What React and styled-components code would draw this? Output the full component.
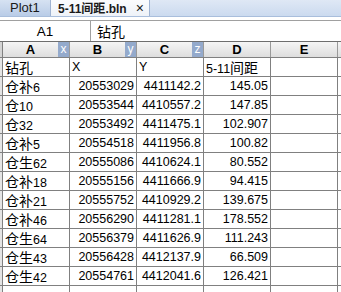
import styled, { createGlobalStyle } from "styled-components";

const GlobalStyle = createGlobalStyle`
  html, body {
    margin: 0;
    padding: 0;
    background: #ffffff;
  }
  body {
    font-family: "Liberation Sans", "Noto Sans CJK SC", sans-serif;
    font-size: 12.5px;
    color: #000;
    overflow: hidden;
  }
`;

const columns = [
  { name: "A", badge: "x" },
  { name: "B", badge: "y" },
  { name: "C", badge: "z" },
  { name: "D" },
  { name: "E" },
];

const rows = [
  ["钻孔", "X", "Y", "5-11间距"],
  ["仓补6", "20553029", "4411142.2", "145.05"],
  ["仓10", "20553544", "4410557.2", "147.85"],
  ["仓32", "20553492", "4411475.1", "102.907"],
  ["仓补5", "20554518", "4411956.8", "100.82"],
  ["仓生62", "20555086", "4410624.1", "80.552"],
  ["仓补18", "20555156", "4411666.9", "94.415"],
  ["仓补21", "20555752", "4410929.2", "139.675"],
  ["仓补46", "20556290", "4411281.1", "178.552"],
  ["仓生64", "20556379", "4411626.9", "111.243"],
  ["仓生43", "20556428", "4412137.9", "66.509"],
  ["仓生42", "20554761", "4412041.6", "126.421"],
  ["", "", "", ""],
];

// CJK glyphs come out larger than the latin ones in the original grid
const Mixed = ({ text }) =>
  text.split(/([\u4e00-\u9fff]+)/).map((part, i) =>
    /[\u4e00-\u9fff]/.test(part) ? <Cjk key={i}>{part}</Cjk> : part
  );

export default function App() {
  return (
    <Page>
      <GlobalStyle />
      <TabBar>
        <Tab>Plot1</Tab>
        <Tab active>
          <TabTitle>
            5-11<Cjk>间距</Cjk>.bln
          </TabTitle>
          <Close>×</Close>
        </Tab>
      </TabBar>
      <FormulaBar>
        <NameBox>A1</NameBox>
        <FormulaText>
          <Cjk>钻孔</Cjk>
        </FormulaText>
      </FormulaBar>
      <Grid>
        <HeadRow>
          <Gutter head />
          {columns.map((c) => (
            <HeadCell key={c.name}>
              <HeadLabel>{c.name}</HeadLabel>
              {c.badge && <Badge>{c.badge}</Badge>}
            </HeadCell>
          ))}
          <HeadCell />
        </HeadRow>
        {rows.map((r, i) => (
          <Row key={i}>
            <Gutter />
            {r.map((v, j) => (
              <Cell key={j} numeric={i > 0 && j > 0}>
                <Mixed text={v} />
              </Cell>
            ))}
            <Cell />
            <Cell />
          </Row>
        ))}
      </Grid>
    </Page>
  );
}

const Page = styled.div`
  width: 341px;
  height: 292px;
  overflow: hidden;
  display: flex;
  flex-direction: column;
`;

const Cjk = styled.span`
  font-family: "Noto Sans CJK SC", sans-serif;
  font-size: 14px;
`;

const TabBar = styled.div`
  display: flex;
  height: 16px;
  flex-shrink: 0;
  background: linear-gradient(#dfe8f5, #cbdaef);
  border-bottom: 1px solid #a9bedc;
  margin-bottom: 3px;
`;

const Tab = styled.div`
  display: flex;
  align-items: center;
  height: 100%;
  box-sizing: border-box;
  padding: ${(p) => (p.active ? "0 5px 0 7px" : "0 10px")};
  width: ${(p) => (p.active ? "99px" : "51px")};
  font-size: ${(p) => (p.active ? "12px" : "13px")};
  font-weight: ${(p) => (p.active ? "bold" : "normal")};
  color: #1a1a1a;
  background: ${(p) =>
    p.active ? "linear-gradient(#fbfcfe, #eef2f8)" : "linear-gradient(#d6e2f2, #b9cce7)"};
  border-right: 1px solid #9fb3d2;
  line-height: 16px;
  white-space: nowrap;
  overflow: hidden;
`;

const TabTitle = styled.span`
  ${Cjk} {
    font-size: 12px;
    font-weight: bold;
  }
`;

const Close = styled.span`
  font-size: 14px;
  font-weight: normal;
  margin-left: auto;
`;

const FormulaBar = styled.div`
  display: flex;
  height: 20px;
  flex-shrink: 0;
  border-top: 1px solid #a0a0a0;
  border-bottom: 1px solid #6e6e6e;
`;

const NameBox = styled.div`
  width: 90px;
  border-right: 1px solid #a0a0a0;
  display: flex;
  align-items: center;
  justify-content: center;
  font-size: 13.5px;
`;

const FormulaText = styled.div`
  padding-left: 6px;
  display: flex;
  align-items: center;
`;

const Grid = styled.div`
  display: flex;
  flex-direction: column;
`;

const HeadRow = styled.div`
  display: flex;
  height: 15px;
  flex-shrink: 0;
  border-bottom: 1px solid #808080;
  background: linear-gradient(#f5f5f5, #dedede);
`;

const Row = styled.div`
  display: flex;
  height: 18px;
  flex-shrink: 0;
  border-bottom: 1px solid #808080;
`;

const Gutter = styled.div`
  width: 3px;
  flex-shrink: 0;
  box-sizing: border-box;
  border-right: 1px solid #808080;
  background: ${(p) => (p.head ? "#d4d4d4" : "#e4e4e4")};
`;

const HeadCell = styled.div`
  width: 67px;
  flex-shrink: 0;
  box-sizing: border-box;
  display: flex;
  border-right: 1px solid #9a9a9a;
`;

const HeadLabel = styled.div`
  flex: 1;
  text-align: center;
  font-weight: bold;
  font-size: 13px;
  line-height: 15px;
`;

const Badge = styled.div`
  width: 11px;
  background: #94aacc;
  color: #ffffff;
  font-size: 12px;
  line-height: 14px;
  text-align: center;
`;

const Cell = styled.div`
  width: 67px;
  flex-shrink: 0;
  box-sizing: border-box;
  border-right: 1px solid #808080;
  padding: 0 2px;
  text-align: ${(p) => (p.numeric ? "right" : "left")};
  line-height: 18px;
  white-space: nowrap;
  overflow: hidden;
`;
